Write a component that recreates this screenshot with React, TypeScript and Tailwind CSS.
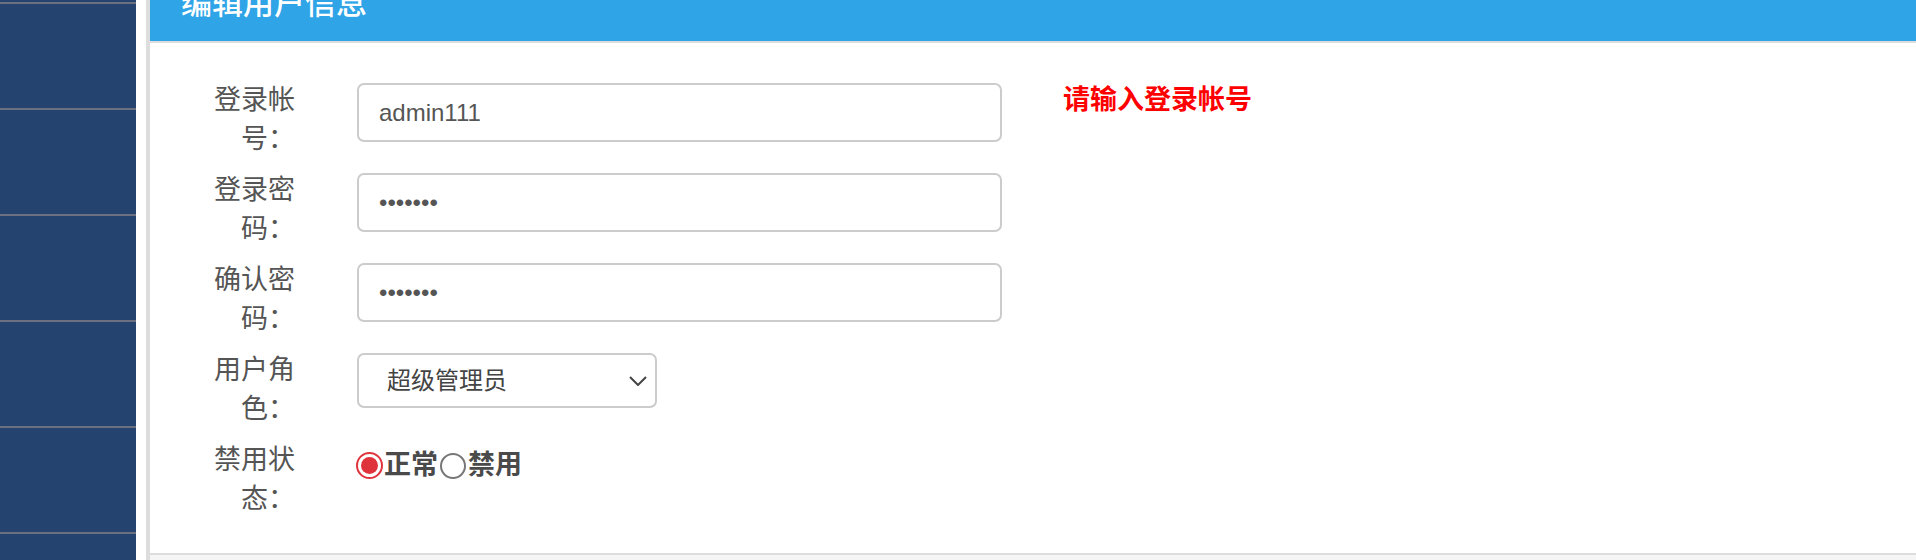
const font = { fontFamily: '"Liberation Sans", "Noto Sans CJK SC", sans-serif' }

const Label = ({ text }: { text: string }) => (
  <div className="w-[90px] shrink-0 text-right text-[27px] leading-[39px] text-[#555]">{text}</div>
)

const SideItem = () => (
  <>
    <div className="h-[2px] shrink-0 bg-[#6c7080]" />
    <div className="h-[104px] shrink-0" />
  </>
)

const App = () => {
  return (
    <div className="flex h-[560px] w-[1916px] overflow-hidden bg-white" style={font}>
      {/* sidebar */}
      <div className="flex w-[136px] shrink-0 flex-col overflow-hidden bg-[#24446f]">
        <div className="h-[2px] shrink-0" />
        <SideItem />
        <SideItem />
        <SideItem />
        <SideItem />
        <SideItem />
        <SideItem />
      </div>

      {/* main */}
      <div className="ml-[10px] flex flex-1 flex-col border-l-4 border-[#dddddd]">
        <div className="flex h-[41px] shrink-0 items-end overflow-hidden bg-[#2fa4e7] pb-[20px] pl-[31px]">
          <h3 className="text-[31px] font-medium leading-[34px] text-white">编辑用户信息</h3>
        </div>
        <div className="h-[2px] shrink-0 bg-[#dddddd]" />

        <div className="flex flex-col gap-[12px] bg-white pb-[34px] pl-[55px] pt-[38px]">
          <div className="flex items-start">
            <Label text="登录帐号：" />
            <input
              readOnly
              value="admin111"
              className="ml-[62px] mt-[2px] h-[59px] w-[645px] rounded-[7px] border-2 border-[#cccccc] px-[20px] text-[24px] text-[#555] outline-none"
              style={font}
            />
            <span className="ml-[61px] text-[27px] font-bold leading-[39px] text-[#ff0000]">请输入登录帐号</span>
          </div>

          <div className="flex items-start">
            <Label text="登录密码：" />
            <input
              readOnly
              type="password"
              value="1234567"
              className="ml-[62px] mt-[2px] h-[59px] w-[645px] rounded-[7px] border-2 border-[#cccccc] px-[20px] text-[24px] text-[#555] outline-none"
              style={font}
            />
          </div>

          <div className="flex items-start">
            <Label text="确认密码：" />
            <input
              readOnly
              type="password"
              value="1234567"
              className="ml-[62px] mt-[2px] h-[59px] w-[645px] rounded-[7px] border-2 border-[#cccccc] px-[20px] text-[24px] text-[#555] outline-none"
              style={font}
            />
          </div>

          <div className="flex items-start">
            <Label text="用户角色：" />
            <div className="ml-[62px] mt-[2px] flex h-[55px] w-[300px] items-center justify-between rounded-[7px] border-2 border-[#cccccc] pl-[28px] pr-[8px]">
              <span className="text-[24px] text-[#444]">超级管理员</span>
              <svg width="18" height="10" viewBox="0 0 18 10">
                <polyline points="1,1 9,9 17,1" fill="none" stroke="#444" strokeWidth="2" />
              </svg>
            </div>
          </div>

          <div className="flex items-start">
            <Label text="禁用状态：" />
            <div className="ml-[61px] mt-[5px] flex items-center text-[27px] font-bold leading-[39px] text-[#4a4a4a]">
              <span className="flex h-[27px] w-[27px] items-center justify-center rounded-full border-2 border-[#e0343d]">
                <span className="h-[17px] w-[17px] rounded-full bg-[#e0343d]" />
              </span>
              <span className="ml-[1px]">正常</span>
              <span className="ml-[2px] h-[26px] w-[26px] rounded-full border-2 border-[#777]" />
              <span className="ml-[2px]">禁用</span>
            </div>
          </div>
        </div>

        <div className="h-[2px] shrink-0 bg-[#dddddd]" />
        <div className="flex-1 bg-[#f5f5f5]" />
      </div>
    </div>
  )
}

export default App
